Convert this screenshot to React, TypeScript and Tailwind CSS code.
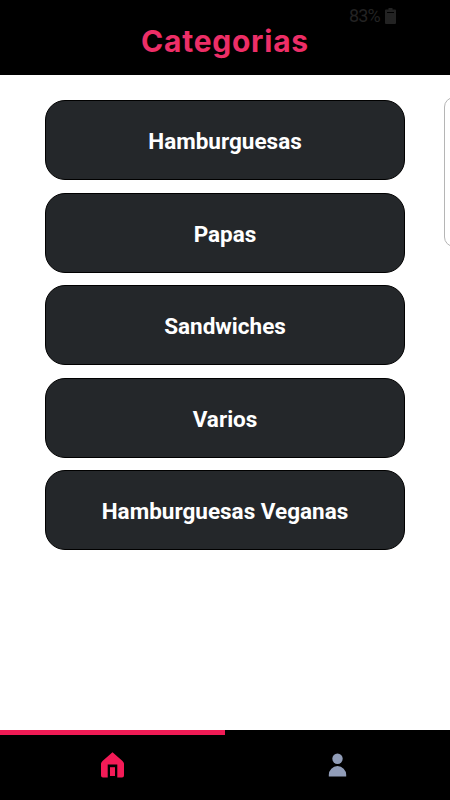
import { useState } from 'react';

const categorias = [
  { id: 1, nombre: 'Hamburguesas' },
  { id: 2, nombre: 'Papas' },
  { id: 3, nombre: 'Sandwiches' },
  { id: 4, nombre: 'Varios' },
  { id: 5, nombre: 'Hamburguesas Veganas' },
];

const BatteryIcon = () => (
  <svg width="11" height="16" viewBox="0 0 11 16" fill="#232323">
    <path d="M3.500 0h4v1.500H10a1 1 0 0 1 1 1V15a1 1 0 0 1-1 1H1a1 1 0 0 1-1-1V2.500a1 1 0 0 1 1-1h2.500z" />
    <path d="M2 4h7v1H2z" fill="#000" />
  </svg>
);

const HomeIcon = () => (
  <svg width="25" height="26" viewBox="-0.5 0 25 26" fill="#f31b57">
    <path d="M12 0.300 22 9Q23.500 10.300 23.500 12V23.500Q23.500 25.500 21.500 25.500H16.800V12.500H7.200V25.500H2.500Q0.500 25.500 0.500 23.500V12Q0.500 10.300 2 9Z" />
    <path d="M9.500 15.200h5v8.800h-5z" />
  </svg>
);

const UserIcon = () => (
  <svg width="19" height="24" viewBox="-0.5 0 19 24" fill="#919db8">
    <circle cx="9" cy="5.700" r="5.200" />
    <path d="M0.300 23.500V21.800A8.700 8.700 0 0 1 17.700 21.800V23.500Z" />
  </svg>
);

const App = () => {
  const [tab, setTab] = useState('home');

  return (
    <div className="relative flex h-[800px] w-[450px] flex-col overflow-hidden bg-white font-['Roboto',sans-serif]">
      <header className="relative flex h-[75px] shrink-0 justify-center bg-black pt-[21px]">
        <h1 className="font-['Inter',sans-serif] text-[30px] leading-10 font-bold tracking-[0.75px] text-[#ed2e67]">
          Categorias
        </h1>
        <div className="absolute top-[7px] left-[349px] flex items-center gap-[5px] text-[18px] leading-[18px] tracking-[-0.9px] text-[#232323]">
          <span>83%</span>
          <BatteryIcon />
        </div>
      </header>

      <main className="flex grow flex-col gap-[12.5px] px-[45px] pt-[25.4px]">
        {categorias.map((categoria) => (
          <button
            key={categoria.id}
            className="flex h-20 w-full items-center justify-center rounded-[20px] border border-black bg-[#24272a] pt-[3px] text-[22.5px] font-bold text-white"
          >
            {categoria.nombre}
          </button>
        ))}
      </main>

      {/* next page of the carousel */}
      <div className="absolute top-[97px] left-[444px] h-[150px] w-[360px] rounded-[10px] border border-[#b5b5b5]" />

      <nav className="grid h-[70px] shrink-0 grid-cols-2 bg-black">
        <button
          onClick={() => setTab('home')}
          className={`flex justify-center border-t-5 pt-[17px] ${tab === 'home' ? 'border-[#f01b55]' : 'border-black'}`}
        >
          <HomeIcon />
        </button>
        <button
          onClick={() => setTab('user')}
          className={`flex justify-center border-t-5 pt-[18px] ${tab === 'user' ? 'border-[#f01b55]' : 'border-black'}`}
        >
          <UserIcon />
        </button>
      </nav>
    </div>
  );
};

export default App;
